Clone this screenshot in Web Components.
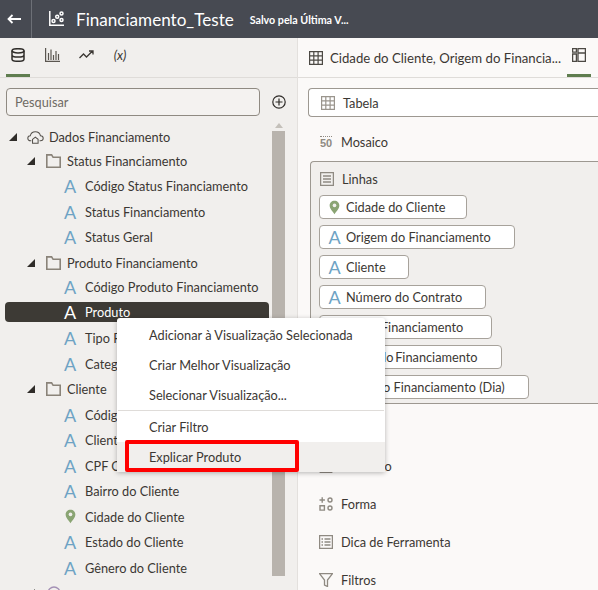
<!DOCTYPE html>
<html lang="pt-BR">
<head>
<meta charset="utf-8">
<title>Financiamento_Teste</title>
<style>
	html, body { margin: 0; height: 100%; overflow: hidden; }
	body { font-family: Lato, "Open Sans", sans-serif; font-size: 12.75px; color: #3b3733; }
</style>
</head>
<body>
<app-shell>
	<app-header slot="header" title-text="Financiamento_Teste" status="Salvo pela Última V..."></app-header>

	<side-panel slot="left">
		<tree-row level="0" icon="cloud" open h="24">Dados Financiamento</tree-row>
		<tree-row level="1" icon="folder" open h="24">Status Financiamento</tree-row>
		<tree-row level="2" icon="attr" h="25.5">Código Status Financiamento</tree-row>
		<tree-row level="2" icon="attr" h="25.5">Status Financiamento</tree-row>
		<tree-row level="2" icon="attr" h="25.5">Status Geral</tree-row>
		<tree-row level="1" icon="folder" open h="25.5">Produto Financiamento</tree-row>
		<tree-row level="2" icon="attr" h="24">Código Produto Financiamento</tree-row>
		<tree-row level="2" icon="attr" selected h="26">Produto</tree-row>
		<tree-row level="2" icon="attr" h="25.5">Tipo Financiamento</tree-row>
		<tree-row level="2" icon="attr" h="25.5">Categoria</tree-row>
		<tree-row level="1" icon="folder" open h="26">Cliente</tree-row>
		<tree-row level="2" icon="attr" h="25.5">Código do Cliente</tree-row>
		<tree-row level="2" icon="attr" h="25">Cliente</tree-row>
		<tree-row level="2" icon="attr" h="25.5">CPF Cliente</tree-row>
		<tree-row level="2" icon="attr" h="25.5">Bairro do Cliente</tree-row>
		<tree-row level="2" icon="pin" h="25.5">Cidade do Cliente</tree-row>
		<tree-row level="2" icon="attr" h="25.5">Estado do Cliente</tree-row>
		<tree-row level="2" icon="attr" h="25.5">Gênero do Cliente</tree-row>
		<tree-row level="1" icon="circle" open h="25.5"></tree-row>
	</side-panel>

	<grammar-panel slot="right">
		<grammar-row icon="table" boxed>Tabela</grammar-row>
		<grammar-row icon="mosaic">Mosaico</grammar-row>
		<grammar-box>
			<grammar-row slot="label" icon="lines" plain>Linhas</grammar-row>
			<field-chip icon="pin" style="width:148px">Cidade do Cliente</field-chip>
			<field-chip icon="attr">Origem do Financiamento</field-chip>
			<field-chip icon="attr" style="width:90px">Cliente</field-chip>
			<field-chip icon="attr">Número do Contrato</field-chip>
			<field-chip icon="attr" style="width:173px;word-spacing:3px">Valor Financiamento</field-chip>
			<field-chip icon="attr" style="width:183px;word-spacing:-1.5px">Prazo do Financiamento</field-chip>
			<field-chip icon="attr" style="width:210px">Data do Financiamento (Dia)</field-chip>
		</grammar-box>
		<grammar-row icon="color">Cor</grammar-row>
		<grammar-row icon="size">Tamanho</grammar-row>
		<grammar-row icon="shape">Forma</grammar-row>
		<grammar-row icon="tip">Dica de Ferramenta</grammar-row>
		<grammar-row icon="filter">Filtros</grammar-row>
	</grammar-panel>

	<context-menu slot="overlay">
		<menu-item>Adicionar à Visualização Selecionada</menu-item>
		<menu-item>Criar Melhor Visualização</menu-item>
		<menu-item>Selecionar Visualização...</menu-item>
		<hr>
		<menu-item>Criar Filtro</menu-item>
		<menu-item active marked>Explicar Produto</menu-item>
	</context-menu>
</app-shell>

<script>
const ICONS = {
	attr: `<span class="glyph">A</span>`,
	pin: `<svg viewBox="0 0 12 16" width="11" height="15"><path d="M6 .6C2.9.6.7 2.9.7 5.8c0 3.6 3.7 6.9 5.3 9.6 1.6-2.7 5.3-6 5.3-9.6C11.3 2.9 9.1.6 6 .6z" fill="#8aa473"/><circle cx="6" cy="5.7" r="2" fill="#f1efed"/></svg>`,
	folder: `<svg viewBox="0 0 15 14" width="15" height="14" fill="none" stroke="#8a8379" stroke-width="1.6"><path d="M.8 13.200V.9h4.800l1.500 2.400h7.100v9.900z"/></svg>`,
	cloud: `<svg viewBox="0 0 18 14" width="17" height="13" fill="none" stroke="#55514c" stroke-width="1.1"><path d="M4.500 10.500H3.600C1.900 10.500.7 9.300.7 7.800c0-1.500 1.200-2.700 2.700-2.700C4 2.400 6.200.7 8.800.7c2.800 0 5 1.800 5.500 4.300 1.800 0 3 1.200 3 2.800 0 1.500-1.200 2.700-2.900 2.700h-1"/><path d="M5.800 9l3-2.400 3 2.400v4.300h-6z"/></svg>`,
	db: `<svg viewBox="0 0 14 14" width="14" height="14" fill="none" stroke="#2f2c29" stroke-width="1.5"><ellipse cx="7" cy="2.800" rx="6" ry="2.100"/><path d="M1 2.800v8.400c0 1.200 2.700 2.100 6 2.100s6-.9 6-2.100V2.800M1 7c0 1.200 2.700 2.100 6 2.100S13 8.200 13 7"/></svg>`,
	bars: `<svg viewBox="0 0 15 14" width="15" height="14" fill="none" stroke="#5b5650" stroke-width="1.200"><path d="M.6 0v13.400H15M3.500 12V5M6 12V1.500M8.500 12V7M11 12V3M13.500 12V6"/></svg>`,
	trend: `<svg viewBox="0 0 15 9" width="15" height="9" fill="none" stroke="#3b3733" stroke-width="1.300"><path d="M.5 8l4-4 3 3 6-6M10 1h4v3.500"/></svg>`,
	chart: `<svg viewBox="0 0 15 15" width="15" height="15" fill="none" stroke="#fff" stroke-width="1.500"><path d="M.8 0v14.200H15"/><circle cx="4.500" cy="10" r="1.500"/><circle cx="8.200" cy="5.800" r="1.500"/><circle cx="12.500" cy="2.500" r="1.500"/><circle cx="12.500" cy="9" r="1.500"/></svg>`,
	grid: `<svg viewBox="0 0 14 14" width="14" height="14" fill="none" stroke="#4c4944" stroke-width="1.200"><path d="M.6.6h12.800v12.800H.6zM.6 4.800h12.800M.6 9.100h12.800M4.800.6v12.800M9.100.6v12.800"/></svg>`,
	panel: `<svg viewBox="0 0 14 14" width="14" height="14" fill="none" stroke="#4c4944" stroke-width="1.300"><path d="M.6.6h3.800v3.500H.6zM.6 6h3.800v7.400H.6zM6 .6h7.400v12.800H6zM6 5h7.400"/></svg>`,
	table: `<svg viewBox="0 0 14 14" width="14" height="14" fill="none" stroke="#9a958d" stroke-width="1.200"><path d="M.6.6h12.800v12.800H.6zM.6 4.800h12.800M.6 9.100h12.800M4.800.6v12.800M9.100.6v12.800"/></svg>`,
	mosaic: `<span class="fifty">50</span>`,
	lines: `<svg viewBox="0 0 14 14" width="14" height="14" fill="none" stroke="#8f8a82" stroke-width="1.300"><path d="M.6.6h12.800v12.800H.6zM3 4h8M3 7h8M3 10h8"/></svg>`,
	color: `<svg viewBox="0 0 14 14" width="14" height="14" fill="none" stroke="#8f8a82" stroke-width="1.200"><circle cx="7" cy="7" r="6"/></svg>`,
	size: `<svg viewBox="0 0 14 14" width="14" height="14" fill="none" stroke="#8f8a82" stroke-width="1.200"><path d="M.6 13.400h12.800"/></svg>`,
	shape: `<svg viewBox="0 0 14 14" width="14" height="14" fill="none" stroke="#8f8a82" stroke-width="1.400"><path d="M3.200.3v5.400M.5 3h5.400M1 8.700h4.400v4.400H1z"/><circle cx="11" cy="3" r="2"/><circle cx="11" cy="11" r="2"/></svg>`,
	tip: `<svg viewBox="0 0 14 14" width="14" height="14" fill="none" stroke="#8f8a82" stroke-width="1.300"><path d="M.6.6h12.800v12.800H.6zM5.500 4h6M5.500 7h6M5.500 10h6M2.500 4h1.500M2.500 7h1.500M2.500 10h1.500"/></svg>`,
	filter: `<svg viewBox="0 0 14 14" width="14" height="14" fill="none" stroke="#8f8a82" stroke-width="1.300"><path d="M.5.6h13L8.500 7v6.500l-3-1.500V7z"/></svg>`,
	circle: `<svg viewBox="0 0 14 14" width="14" height="14" fill="none" stroke="#a491b5" stroke-width="1.300"><circle cx="7" cy="7" r="6"/></svg>`
};

const ATTR_STYLE = `
	.glyph { font: 400 18px/1 Lato, sans-serif; color: #6ea3c4; display: block; }
	.fifty { font: 700 11px/1 "Liberation Sans", sans-serif; color: #8f8a82; border-top: 1px dotted #8f8a82; padding-top: 1px; display: block; }
	svg { display: block; }
`;

function define(name, html, extra = {}) {
	class El extends HTMLElement {
		constructor() {
			super();
			this.attachShadow({mode:'open'});
			this.shadowRoot.innerHTML = html;
		}
		connectedCallback() {
			this.shadowRoot.querySelectorAll('[data-icon]').forEach(node => {
				node.innerHTML = ICONS[this.getAttribute('icon')] || '';
			});
			if (extra.connected) extra.connected.call(this);
		}
	}
	customElements.define(name, El);
}

define('app-shell', `
	<style>
		:host { display: grid; grid-template: 38px 552px / 298px 300px; width: 598px; height: 590px; position: relative; overflow: hidden; }
		::slotted([slot=header]) { grid-column: 1 / 3; }
	</style>
	<slot name="header"></slot>
	<slot name="left"></slot>
	<slot name="right"></slot>
	<slot name="overlay"></slot>
`);

define('app-header', `
	<style>
		${ATTR_STYLE}
		:host { display: flex; align-items: center; background: #474a52; color: #fff; }
		.back { width: 32px; height: 100%; box-sizing: border-box; border-right: 1px solid #6d7077; display: flex; align-items: center; padding-left: 7px; }
		.chart { margin-left: 17px; margin-top: -1px; }
		h1 { font: 400 17.1px Lato, sans-serif; margin: 0 0 0 12px; }
		span { font: 700 10.7px Lato, sans-serif; margin-left: 16px; }
	</style>
	<div class="back">
		<svg viewBox="0 0 14 10" width="14" height="10" fill="none" stroke="#fff" stroke-width="1.800"><path d="M14 5H1.500M5.500 1L1.500 5l4 4"/></svg>
	</div>
	<div class="chart" id="chart"></div>
	<h1 id="title"></h1>
	<span id="status"></span>
`, {
	connected() {
		this.shadowRoot.querySelector('#chart').innerHTML = ICONS.chart;
		this.shadowRoot.querySelector('#title').textContent = this.getAttribute('title-text');
		this.shadowRoot.querySelector('#status').textContent = this.getAttribute('status');
	}
});

define('side-panel', `
	<style>
		:host { display: flex; flex-direction: column; background: #f1efed; border-right: 1px solid #e3e0dd; overflow: hidden; min-height: 0; }
		.tabs { display: flex; height: 39px; flex: none; border-bottom: 1px solid #dfdcd9; padding-left: 6px; }
		.tab { width: 24px; height: 100%; box-sizing: border-box; margin-right: 10px; display: flex; align-items: center; justify-content: center; padding-bottom: 6px; }
		.tab.on { border-bottom: 3px solid #5f7d4f; padding-bottom: 3px; }
		.x { font: italic 400 13px Lato, sans-serif; color: #3b3733; }
		.search { display: flex; align-items: center; padding: 10px 0 0 6px; flex: none; }
		.input { width: 254px; height: 28px; box-sizing: border-box; border: 1px solid #8f8a82; border-radius: 4px; padding: 0 8px; line-height: 26px; font-size: 12.75px; color: #6f6a64; background: #f4f2f0; }
		.plus { margin-left: 12px; }
		.body { display: flex; flex: 1; min-height: 0; margin-top: 9.4px; }
		.tree { width: 264px; margin-left: 5px; flex: none; }
		.scroll { width: 13px; margin-left: 3px; display: flex; flex-direction: column; align-items: center; }
		.up { width: 0; height: 0; border: 4px solid transparent; border-top: 0; border-bottom: 5px solid #c4c0ba; margin-bottom: 3px; margin-top: -2px; }
		.thumb { width: 13px; height: 445px; background: #b8b3ad; }
	</style>
	<div class="tabs">
		<div class="tab on">${ICONS.db}</div>
		<div class="tab">${ICONS.bars}</div>
		<div class="tab">${ICONS.trend}</div>
		<div class="tab"><span class="x">(x)</span></div>
	</div>
	<div class="search">
		<div class="input">Pesquisar</div>
		<div class="plus"><svg viewBox="0 0 14 14" width="14" height="14" fill="none" stroke="#2f2c29" stroke-width="1.200" style="display:block"><circle cx="7" cy="7" r="6.200"/><path d="M7 3.500v7M3.500 7h7"/></svg></div>
	</div>
	<div class="body">
		<div class="tree"><slot></slot></div>
		<div class="scroll"><div class="up"></div><div class="thumb"></div></div>
	</div>
`);

define('tree-row', `
	<style>
		${ATTR_STYLE}
		:host { display: flex; align-items: center; font-size: 12.75px; color: #3b3733; white-space: nowrap; }
		.pill { display: flex; align-items: center; flex: 1; height: 20px; border-radius: 4px; }
		:host([selected]) .pill { background: #3d3a35; color: #fff; }
		:host([selected]) .glyph { color: #fff; }
		.tri { width: 0; height: 0; border-style: solid; border-width: 0 0 8px 8px; border-color: transparent transparent #2f2c29 transparent; margin-right: 10px; visibility: hidden; }
		:host([open]) .tri { visibility: visible; }
		.icon { display: flex; justify-content: center; flex: none; }
		:host([level="0"]) .pill { padding-left: 4px; }
		:host([level="0"]) .icon { width: 17px; margin-right: 5px; margin-left: 0; }
		:host([level="1"]) .pill { padding-left: 22px; }
		:host([level="1"]) .icon { width: 15px; margin-right: 6px; margin-left: 1px; }
		:host([level="2"]) .pill { padding-left: 58px; }
		:host([level="2"]) .tri { display: none; }
		:host([level="2"]) .icon { width: 14px; margin-right: 8px; }
	</style>
	<div class="pill">
		<div class="tri"></div>
		<div class="icon" data-icon></div>
		<slot></slot>
	</div>
`, {
	connected() {
		this.style.height = this.getAttribute('h') + 'px';
	}
});

define('grammar-panel', `
	<style>
		:host { display: flex; flex-direction: column; background: #fbf9f8; overflow: hidden; min-height: 0; }
		.tabs { display: flex; align-items: center; height: 39px; flex: none; border-bottom: 1px solid #dfdcd9; padding-left: 11px; white-space: nowrap; font-size: 13.2px; }
		.tabs span { margin-left: 7px; width: 229px; }
		.tab { width: 24px; height: 100%; box-sizing: border-box; display: flex; align-items: center; justify-content: center; padding-bottom: 3px; border-bottom: 3px solid #5f7d4f; margin-left: 8px; }
		.body { padding: 10px 0 0 10px; display: flex; flex-direction: column; }
	</style>
	<div class="tabs">
		${ICONS.grid}
		<span>Cidade do Cliente, Origem do Financia...</span>
		<div class="tab">${ICONS.panel}</div>
	</div>
	<div class="body"><slot></slot></div>
`);

define('grammar-row', `
	<style>
		${ATTR_STYLE}
		:host { display: flex; align-items: center; height: 38px; padding-left: 11px; font-size: 12.75px; color: #3b3733; flex: none; }
		:host([boxed]) { height: 29px; box-sizing: border-box; background: #fff; border: 1px solid #9d9891; border-right: 0; border-radius: 4px 0 0 4px; padding-left: 12px; margin-bottom: 6px; margin-right: -2px; }
		:host([plain]) { height: 33px; padding-left: 9px; }
		.icon { width: 14px; margin-right: 8px; display: flex; justify-content: center; flex: none; }
	</style>
	<div class="icon" data-icon></div>
	<slot></slot>
`);

define('grammar-box', `
	<style>
		:host { display: flex; flex-direction: column; align-items: flex-start; height: 243px; box-sizing: border-box; margin: 0 -2px 5px 2px; background: #f1efed; border: 1px solid #9d9891; border-right: 0; border-radius: 4px 0 0 0; }
		.chips { display: flex; flex-direction: column; align-items: flex-start; gap: 6px; padding-left: 8px; }
	</style>
	<slot name="label"></slot>
	<div class="chips"><slot></slot></div>
`);

define('field-chip', `
	<style>
		${ATTR_STYLE}
		:host { display: flex; align-items: center; height: 24px; box-sizing: border-box; padding: 0 23px 0 9px; background: #fff; border: 1px solid #a7a29b; border-radius: 4px; font-size: 12.75px; color: #3b3733; white-space: nowrap; }
		.icon { width: 11px; margin-right: 6px; display: flex; justify-content: center; }
	</style>
	<div class="icon" data-icon></div>
	<slot></slot>
`);

define('context-menu', `
	<style>
		:host { position: absolute; left: 117px; top: 318px; width: 268px; height: 154px; box-sizing: border-box; padding-top: 2px; background: #fff; box-shadow: 0 1px 5px rgba(0,0,0,.28); border-radius: 3px 3px 0 0; display: block; }
		::slotted(hr) { border: 0; border-top: 1px solid #dfdcd9; margin: 0 1px 1px; }
	</style>
	<slot></slot>
`);

define('menu-item', `
	<style>
		:host { display: flex; align-items: center; height: 30px; padding-left: 32px; font-size: 12.75px; color: #3b3733; position: relative; }
		:host([active]) { background: #f1efed; }
		.mark { display: none; position: absolute; left: 8px; top: -2px; width: 174px; height: 32px; box-sizing: border-box; border: 4px solid #f00; border-radius: 2px; }
		:host([marked]) .mark { display: block; }
	</style>
	<slot></slot>
	<div class="mark"></div>
`);
</script>
</body>
</html>
